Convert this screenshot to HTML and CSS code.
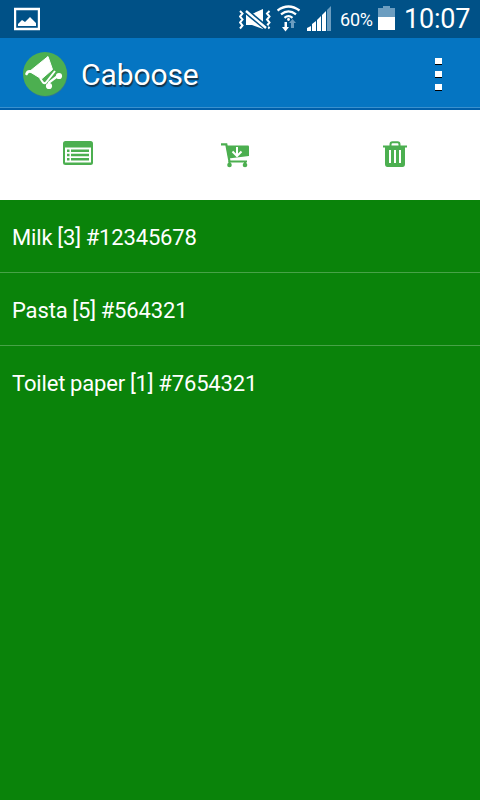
FILE: index.html
```html
<!DOCTYPE html>
<html lang="en">
<head>
<meta charset="utf-8">
<meta name="viewport" content="width=device-width, initial-scale=1">
<title>Caboose</title>
<link rel="stylesheet" href="styles.css">
</head>
<body>

<div class="status-bar">
  <svg class="picture" width="26" height="38" viewBox="14 0 26 38">
    <path d="M15 9h24v20H15z" fill="none" stroke="#fff" stroke-width="2.4"/>
    <path d="M18 26v-2l4-4 3 2 5-5 6 6v3z" fill="#fff"/>
  </svg>

  <svg class="mute" width="32" height="38" viewBox="239 0 32 38">
    <path d="M240 11l2.500 2.500-2.500 3 2.500 3-2.500 3 2.500 3-2.500 3M269.500 11l-2.500 2.500 2.500 3-2.500 3 2.500 3-2.500 3 2.500 3" fill="none" stroke="#fff" stroke-width="2"/>
    <path d="M246 14h6l11-5v20l-11-4h-6z" fill="#fff"/>
    <path d="M244 9.500l23 19" stroke="#005187" stroke-width="5.500"/>
    <path d="M246 11l20 17" stroke="#fff" stroke-width="2.400"/>
  </svg>

  <svg class="wifi" width="24" height="38" viewBox="277 0 24 38">
    <g fill="none" stroke="#fff" stroke-width="2.300">
      <path d="M277.500 10.500Q288.500 2.500 299.500 10.500"/>
      <path d="M281 14.300Q288.500 8.500 296 14.300"/>
      <path d="M284.500 17.800Q288.500 14.500 292.500 17.800"/>
    </g>
    <circle cx="288.500" cy="19.500" r="1.400" fill="#fff"/>
    <path d="M284.500 22h2.500v5h2l-3.500 4.500-3.500-4.500h2.500z" fill="#fff"/>
    <path d="M291 28v-5h-2l3.500-4 3.500 4h-2v5z" fill="#6b9dc0"/>
  </svg>

  <svg class="signal" width="24" height="38" viewBox="307 0 24 38">
    <path d="M307 28l4-2v5h-4zM312 24l4-3v10h-4zM317 20l4-4v15h-4zM322 15l4-4v20h-4z" fill="#fff"/>
    <path d="M327 10l4-4v25h-4z" fill="#6b9dc0"/>
  </svg>

  <span class="percent">60%</span>

  <svg class="battery" width="17" height="38" viewBox="378 0 17 38">
    <path d="M378 8h5V6h7v2h5v9h-17z" fill="#6b9dc0"/>
    <path d="M378 17h17v13h-17z" fill="#fff"/>
  </svg>

  <span class="clock">10:07</span>
</div>

<div class="action-bar">
  <svg class="logo" width="46" height="46" viewBox="0 0 46 46">
    <circle cx="22.500" cy="22.800" r="22" fill="#2d7796"/>
    <circle cx="22" cy="22" r="22" fill="#4caf50"/>
    <path d="M3.500 22q1-3 4-2.500l4 1" fill="none" stroke="#fff" stroke-width="2.600" stroke-linecap="round"/>
    <path d="M25 4.500L29.500 17.500 18.500 27 6.500 19.500z" fill="#fff" stroke="#fff" stroke-linejoin="round"/>
    <path d="M17 26l3 4.500q1.500 1.500 3 0L32 19" fill="none" stroke="#fff" stroke-width="2" stroke-linejoin="round"/>
    <path d="M26 33v-2.500L34 24.500" fill="none" stroke="#fff" stroke-width="2.200"/>
    <circle cx="26" cy="34" r="3.100" fill="#fff"/>
    <circle cx="36" cy="24" r="3.100" fill="#fff"/>
  </svg>
  <h1>Caboose</h1>
  <div class="overflow"><i></i><i></i><i></i></div>
</div>

<div class="toolbar">
  <div class="tool">
    <svg class="list-icon" width="30" height="24" viewBox="0 0 30 24">
      <rect width="30" height="24" rx="2.500" fill="#4caf50"/>
      <path d="M2 6.500h26V21.500H2z" fill="#fff"/>
      <path d="M4 8.500h2.500v2.500H4zM4 12.800h2.500v2.500H4zM4 17h2.500v2.500H4zM8 8.500h18v2.500H8zM8 12.800h18v2.500H8zM8 17h18v2.500H8z" fill="#4caf50"/>
    </svg>
  </div>
  <div class="tool">
    <svg class="cart-icon" width="28" height="25" viewBox="0 0 28 25">
      <path d="M0 1.300h5.300L8.500 18.500H26" fill="none" stroke="#4caf50" stroke-width="2.200"/>
      <path d="M5 2.500h22q1 0 1 1V13L7.500 15.500z" fill="#4caf50"/>
      <path d="M16 4v9M11.500 8.500L16 13l4.500-4.500" fill="none" stroke="#fff" stroke-width="2"/>
      <path d="M8.500 18v4M24 18v4" stroke="#4caf50" stroke-width="2"/>
      <circle cx="8.500" cy="22" r="2.300" fill="#4caf50"/>
      <circle cx="24" cy="22" r="2.300" fill="#4caf50"/>
    </svg>
  </div>
  <div class="tool">
    <svg class="trash-icon" width="24" height="26" viewBox="0 0 24 26">
      <path d="M7.500 5V3.500Q7.500 1.200 9.500 1.200h5Q16.500 1.200 16.500 3.500V5" fill="none" stroke="#4caf50" stroke-width="2"/>
      <path d="M0 4.500h24v2h-2V23q0 3-2.500 3h-15Q2 26 2 23V6.500H0z" fill="#4caf50"/>
      <path d="M6 9h2v13H6zM11 9h2v13h-2zM16 9h2v13h-2z" fill="#fff"/>
    </svg>
  </div>
</div>

<ul class="items">
  <li>Milk [3] #12345678</li>
  <li>Pasta [5] #564321</li>
  <li>Toilet paper [1] #7654321</li>
</ul>

</body>
</html>
```
FILE: styles.css
```css
body {
  margin: 0;
  min-height: 800px;
  background: #0a830a;
  color: #fff;
  font-family: Roboto, sans-serif;
}

svg {
  display: block;
  flex: none;
}

.status-bar {
  display: flex;
  height: 38px;
  padding-left: 14px;
  background: #005187;
  line-height: 38px;
  white-space: nowrap;
}

.mute {
  margin-left: 199px;
}

.wifi,
.signal {
  margin-left: 6px;
}

.percent {
  width: 38px;
  margin-left: 9px;
  font-size: 18px;
  line-height: 40px;
  letter-spacing: -0.2px;
}

.clock {
  margin-left: 9px;
  font-size: 27px;
  letter-spacing: -0.2px;
}

.action-bar {
  display: flex;
  box-sizing: border-box;
  height: 72px;
  padding: 0 38px 0 23px;
  border-bottom: 2px solid #005faa;
  background: #0575c2;
  box-shadow: inset 0 -1px #3990ce;
}

.logo {
  margin-top: 14px;
}

.action-bar h1 {
  margin: 0 auto 0 12px;
  font-size: 30px;
  font-weight: normal;
  line-height: 73px;
  letter-spacing: -0.1px;
  text-shadow: 1px 2px 1px #12324a;
}

.overflow {
  padding-top: 20px;
}

.overflow i {
  display: block;
  width: 7px;
  height: 6px;
  margin-bottom: 6px;
  border-bottom: 1px solid #000;
  background: #fff;
}

.toolbar {
  display: flex;
  height: 90px;
  background: #fff;
}

.tool {
  flex: 1;
}

.list-icon {
  margin: 31px 0 0 63px;
}

.cart-icon {
  margin: 33px 0 0 61px;
}

.trash-icon {
  margin: 31px 0 0 63px;
}

.items {
  margin: 0;
  padding: 0;
  list-style: none;
}

.items li {
  height: 72px;
  padding-left: 12px;
  border-bottom: 1px solid #47a247;
  font-size: 22px;
  line-height: 76px;
  letter-spacing: -0.15px;
  word-spacing: -0.5px;
}

.items li:last-child {
  border-bottom: 0;
}
```
